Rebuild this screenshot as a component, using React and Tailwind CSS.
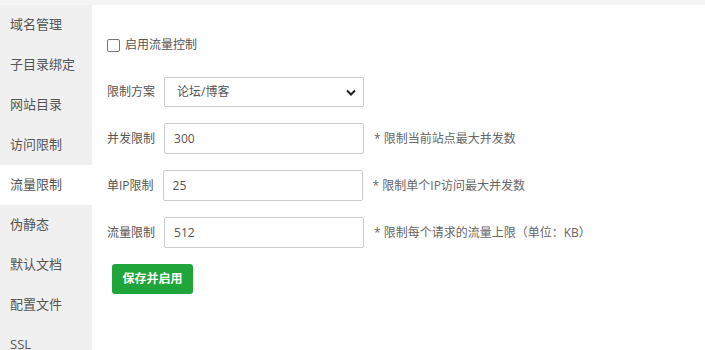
import { useState } from 'react';

const menu = ['域名管理', '子目录绑定', '网站目录', '访问限制', '流量限制', '伪静态', '默认文档', '配置文件', 'SSL'];

const font = { fontFamily: '"Open Sans", "Noto Sans CJK SC", sans-serif' };

function Row({ label, children, hint }) {
  return (
    <div className="flex items-center mb-[16px]">
      <span className="text-[12px] text-[#555] mr-[9px] whitespace-nowrap">{label}</span>
      {children}
      {hint && <span className="ml-[10px] text-[12px] text-[#666]">{hint}</span>}
    </div>
  );
}

export default function App() {
  const [active] = useState('流量限制');
  const [plan, setPlan] = useState('论坛/博客');
  const [perf, setPerf] = useState('300');
  const [perip, setPerip] = useState('25');
  const [rate, setRate] = useState('512');

  const inputCls =
    'w-[200px] h-[31px] border border-[#ccc] rounded-[2px] px-[9px] text-[12px] text-[#555] outline-none bg-white';

  return (
    <div className="w-[705px] h-[350px] overflow-hidden bg-white" style={font}>
      <div className="h-[5px] bg-[#f4f4f4]" />
      <div className="flex">
        {/* left menu */}
        <div className="w-[92px] bg-[#f0f0f0] shrink-0 h-[345px]">
          {menu.map((m) => (
            <div
              key={m}
              className={`h-[40px] flex items-center pl-[10px] text-[13px] text-[#555] ${m === active ? 'bg-white' : ''}`}
            >
              {m}
            </div>
          ))}
        </div>

        {/* form */}
        <div className="flex-1 pl-[15px] pt-[32px]">
          <label className="flex items-center h-[16px] mb-[24px] text-[12px] text-[#555]">
            <span className="w-[13px] h-[13px] border border-[#767676] rounded-[2px] mr-[5px] bg-white" />
            启用流量控制
          </label>

          <Row label="限制方案">
            <div className="relative">
              <select
                value={plan}
                onChange={(e) => setPlan(e.target.value)}
                className="w-[200px] h-[30px] border border-[#ccc] rounded-[2px] pl-[12px] text-[12px] text-[#555] outline-none bg-white appearance-none"
              >
                <option>论坛/博客</option>
                <option>图片站</option>
                <option>下载站</option>
                <option>商城</option>
                <option>门户</option>
                <option>企业</option>
                <option>视频</option>
              </select>
              <svg className="absolute right-[8px] top-[12px] pointer-events-none" width="10" height="7" viewBox="0 0 10 7">
                <path d="M1 1.5 L5 5.5 L9 1.5" stroke="#222" strokeWidth="2" fill="none" />
              </svg>
            </div>
          </Row>

          <Row label="并发限制" hint="* 限制当前站点最大并发数">
            <input value={perf} onChange={(e) => setPerf(e.target.value)} className={inputCls} />
          </Row>

          <Row label="单IP限制" hint="* 限制单个IP访问最大并发数">
            <input value={perip} onChange={(e) => setPerip(e.target.value)} className={inputCls} />
          </Row>

          <Row label="流量限制" hint="* 限制每个请求的流量上限（单位：KB）">
            <input value={rate} onChange={(e) => setRate(e.target.value)} className={inputCls} />
          </Row>

          <button className="ml-[5px] w-[81px] h-[30px] bg-[#20a53a] text-white text-[12px] font-bold rounded-[3px]">
            保存并启用
          </button>
        </div>
      </div>
    </div>
  );
}
